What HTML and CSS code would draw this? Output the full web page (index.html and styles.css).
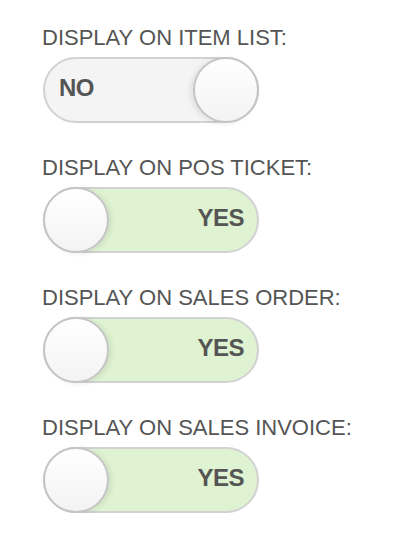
FILE: index.html
```html
<!DOCTYPE html>
<html>
<head>
<meta charset="utf-8">
<link rel="stylesheet" href="styles.css">
</head>
<body>
<div class="form">
  <div class="field">
    <div class="label">DISPLAY ON ITEM LIST:</div>
    <div class="toggle off"><span class="text">NO</span><span class="knob"></span></div>
  </div>
  <div class="field">
    <div class="label">DISPLAY ON POS TICKET:</div>
    <div class="toggle on"><span class="knob"></span><span class="text">YES</span></div>
  </div>
  <div class="field">
    <div class="label">DISPLAY ON SALES ORDER:</div>
    <div class="toggle on"><span class="knob"></span><span class="text">YES</span></div>
  </div>
  <div class="field">
    <div class="label">DISPLAY ON SALES INVOICE:</div>
    <div class="toggle on"><span class="knob"></span><span class="text">YES</span></div>
  </div>
</div>
</body>
</html>
```
FILE: styles.css
```css
html, body {
  margin: 0;
  padding: 0;
  background: #ffffff;
}
body {
  font-family: "Liberation Sans", Arial, sans-serif;
}
.form {
  display: flex;
  flex-direction: column;
  gap: 32px;
  padding: 25px 0 0 42px;
}
.field {
  display: flex;
  flex-direction: column;
  gap: 6px;
}
.label {
  font-size: 22px;
  line-height: 26px;
  color: #555555;
  letter-spacing: 0;
}
.toggle {
  box-sizing: border-box;
  width: 216px;
  height: 66px;
  margin-left: 1px;
  border-radius: 33px;
  border: 2px solid #d2d2d2;
  display: flex;
  align-items: center;
  justify-content: space-between;
}
.toggle.off {
  background: #f4f4f4;
}
.toggle.on {
  background: #dff3d2;
}
.text {
  font-weight: bold;
  font-size: 24px;
  color: #555555;
  letter-spacing: -0.5px;
  margin-bottom: 5px;
}
.off .text {
  margin-left: 14px;
}
.on .text {
  margin-right: 13px;
}
.knob {
  box-sizing: border-box;
  width: 66px;
  height: 66px;
  margin: -2px;
  border-radius: 50%;
  background: linear-gradient(#ffffff, #f3f3f3);
  border: 2px solid #c4c4c4;
}
.on .knob {
  box-shadow: 3px 1px 5px rgba(0, 0, 0, 0.08);
}
.off .knob {
  box-shadow: -3px 1px 5px rgba(0, 0, 0, 0.08);
}
```
